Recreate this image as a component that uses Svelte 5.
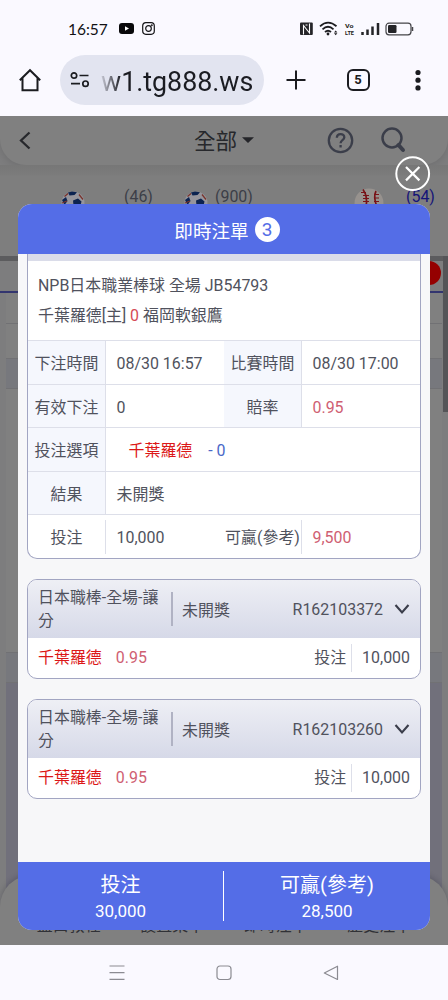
<script lang="ts">
  type Bet = { id: string; name: string; status: string; team: string; odds: string; stake: string };

  const bets: Bet[] = [
    { id: 'R162103372', name: '日本職棒-全場-讓分', status: '未開獎', team: '千葉羅德', odds: '0.95', stake: '10,000' },
    { id: 'R162103260', name: '日本職棒-全場-讓分', status: '未開獎', team: '千葉羅德', odds: '0.95', stake: '10,000' }
  ];

  const tabs = ['盤口教程', '設置菜單', '即時注單', '歷史注單'];
</script>

{#snippet football()}
  <svg class="ball" width="24" height="24" viewBox="0 0 24 24">
    <circle cx="12" cy="12" r="11.5" fill="#96959c" />
    <path d="M7 1.500l4-1 5 .8-2.500 2.800-5 .4z" fill="#0c2350" />
    <path d="M12 9.500l5-2 3.500 3-1 4h-7z" fill="#0c2350" />
    <path d="M1 9l4-3 1.500 4-3 4z" fill="#0c2350" />
    <path d="M3.500 5.500l3.500-3M18 3.500l4 5M1 12l5-2" stroke="#78342c" stroke-width="1.300" />
  </svg>
{/snippet}

<div class="phone">
  <div class="status">
    <span class="clock">16:57</span>
    <svg class="yt" width="15" height="11" viewBox="0 0 15 11">
      <rect width="15" height="11" rx="3" fill="#08080a" />
      <path d="M6 3.200v4.600l4-2.300z" fill="#fff" />
    </svg>
    <svg class="ig" width="13" height="13" viewBox="0 0 13 13" fill="none" stroke="#151518" stroke-width="1.200">
      <rect x=".7" y=".7" width="11.600" height="11.600" rx="3.200" />
      <circle cx="6.500" cy="6.500" r="2.800" />
      <circle cx="9.800" cy="3.200" r=".4" />
    </svg>
    <svg class="signals" width="116" height="16" viewBox="0 0 116 16">
      <rect x="0" y="1.500" width="12.800" height="12.500" rx="1" fill="#252529" />
      <path d="M3.500 13.500V4.500l6 7.500V2.500M5.500 4h2" fill="none" stroke="#fff" stroke-width="1.100" />
      <g fill="none" stroke="#1d1d20" stroke-width="1.800">
        <path d="M20 5.300q8-7.300 16.500 0M22.500 8.300q5.500-5 11 0M25 11q3-2.600 6 0" />
      </g>
      <circle cx="28" cy="13" r="1.400" fill="#1d1d20" />
      <path d="M34 11.500l1.700-2 1.700 2zM34 12.300h3.400l-1.700 2z" fill="#1d1d20" />
      <text x="45" y="7" class="tiny" textLength="8.500" lengthAdjust="spacingAndGlyphs">Vo</text>
      <text x="45" y="14.200" class="tiny" textLength="9" lengthAdjust="spacingAndGlyphs">LTE</text>
      <path d="M62.500 14v-3M67.500 14V8.500M72.500 14V5.500M78 14V2" stroke="#242428" stroke-width="2.500" />
      <rect x="86" y="2.200" width="25" height="11.600" rx="3" fill="none" stroke="#444448" stroke-width="1.200" />
      <rect x="88" y="4" width="8.500" height="8" rx="1.200" fill="#242428" />
      <path d="M112.500 6v4" stroke="#444448" stroke-width="1.500" />
    </svg>
  </div>

  <div class="browser">
    <svg class="home" width="24" height="24" viewBox="0 0 24 24" fill="none" stroke="#1b1c20" stroke-width="2">
      <path d="M1.800 12.200L12 2.200l10.200 10M4.500 10v12.300h15V10" />
    </svg>
    <div class="url">
      <svg width="20" height="18" viewBox="0 0 20 18" fill="none" stroke="#1b1c20" stroke-width="1.700">
        <circle cx="4" cy="4.500" r="2.700" />
        <path d="M9.500 4.500h9M1 12.700h9" />
        <circle cx="15.500" cy="12.700" r="2.700" />
      </svg>
      <span>w1.tg888.ws</span>
    </div>
    <svg class="plus" width="20" height="20" viewBox="0 0 20 20" stroke="#1b1c20" stroke-width="2">
      <path d="M10 .5v19M.5 10h19" />
    </svg>
    <div class="tab-count">5</div>
    <svg class="more" width="6" height="22" viewBox="0 0 6 22" fill="#1b1c20">
      <circle cx="3" cy="3.500" r="2.600" /><circle cx="3" cy="11.200" r="2.600" /><circle cx="3" cy="18.900" r="2.600" />
    </svg>
  </div>

  <div class="page">
    <div class="topbar">
      <svg class="back" width="12" height="20" viewBox="0 0 12 20" fill="none" stroke="#27282c" stroke-width="2.300">
        <path d="M10.500 1.500L2 9.500l8.500 8" />
      </svg>
      <span class="all">全部</span>
      <svg class="caret" width="12" height="7" viewBox="0 0 12 7"><path d="M0 .3h12L6 6z" fill="#242529" /></svg>
      <svg class="help" width="28" height="28" viewBox="0 0 28 28" fill="none" stroke="#3b3e4a" stroke-width="2.300">
        <circle cx="14.500" cy="13.500" r="11.700" />
        <path d="M10.800 10.700c.2-5 7.700-4.500 7.500-.3-.1 2.800-3.700 2.800-3.700 5.800M14.600 18v2.600" />
      </svg>
      <svg class="search" width="26" height="28" viewBox="0 0 26 28" fill="none" stroke="#3b3e4a">
        <circle cx="11" cy="11" r="9.500" stroke-width="2.500" />
        <path d="M17.500 18l4.500 5" stroke-width="4" stroke-linecap="round" />
      </svg>
    </div>

    <div class="sports">
      <div class="sport first">{@render football()}<span>(46)</span></div>
      <div class="sport second">{@render football()}<span>(900)</span></div>
      <div class="sport third">
        <svg class="ball" width="30" height="30" viewBox="0 0 30 30">
          <circle cx="15" cy="15" r="14.500" fill="#97928e" />
          <path d="M9 1.500q5 7 3 17M22 3q-3 6 1 16" fill="none" stroke="#781217" stroke-width="1.700" />
          <path d="M7 4.500h5M9 7.500h6M9 10.500h6M9 13.500h6M20 6.500h5M20 10h5M20 13.500h5" stroke="#781217" stroke-width="1" />
        </svg>
        <span>(54)</span>
      </div>
    </div>

    <div class="backdrop-list">
      <div class="strip"></div>
      <div class="league"><i></i></div>
      <div class="row r1"></div>
      <div class="row r2"></div>
      <div class="row r3"></div>
      <div class="row r4"></div>
      <div class="row r5"></div>
    </div>
    <div class="scrollbar"></div>
    <div class="tabbar">
      {#each tabs as tab}
        <span>{tab}</span>
      {/each}
    </div>

    <div class="modal">
      <div class="modal-head">
        <span>即時注單</span>
        <b>3</b>
      </div>

      <div class="modal-body">
        <div class="card open">
          <div class="match">
            <div>NPB日本職業棒球 全場 JB54793</div>
            <div>千葉羅德[主] <em>0</em> 福岡軟銀鷹</div>
          </div>
          <div class="grid">
            <span class="label">下注時間</span><span class="value">08/30 16:57</span>
            <span class="label">比賽時間</span><span class="value">08/30 17:00</span>
          </div>
          <div class="grid">
            <span class="label">有效下注</span><span class="value">0</span>
            <span class="label">賠率</span><span class="value pink">0.95</span>
          </div>
          <div class="grid">
            <span class="label">投注選項</span>
            <span class="value wide pick"><span class="team">千葉羅德</span><span class="blue">- 0</span></span>
          </div>
          <div class="grid">
            <span class="label">結果</span><span class="value wide">未開獎</span>
          </div>
          <div class="grid last">
            <span class="label">投注</span><span class="value">10,000</span>
            <span class="label">可贏(參考)</span><span class="value pink">9,500</span>
          </div>
        </div>

        {#each bets as bet (bet.id)}
          <div class="card">
            <div class="card-head">
              <span class="name">{bet.name}</span>
              <span class="bar"></span>
              <span class="state">{bet.status}</span>
              <span class="id">{bet.id}</span>
              <svg width="16" height="11" viewBox="0 0 16 11" fill="none" stroke="#3b3e4b" stroke-width="2.100">
                <path d="M1.500 1L8 8.500 14.500 1" />
              </svg>
            </div>
            <div class="card-foot">
              <span class="team">{bet.team}</span>
              <span class="odds">{bet.odds}</span>
              <span class="stake-label">投注</span>
              <span class="stake">{bet.stake}</span>
            </div>
          </div>
        {/each}
      </div>

      <div class="modal-foot">
        <div><span>投注</span><strong>30,000</strong></div>
        <div><span>可贏(參考)</span><strong>28,500</strong></div>
      </div>
    </div>

    <svg class="close" width="36" height="36" viewBox="0 0 36 36" fill="none" stroke="#fff">
      <circle cx="17.700" cy="17.700" r="16.400" stroke-width="2" />
      <path d="M11 11l13.400 13.400M24.400 11L11 24.400" stroke-width="2.200" />
    </svg>
  </div>

  <div class="nav">
    <svg width="16" height="16" viewBox="0 0 16 16" stroke="#8b8b92" stroke-width="1.200"><path d="M.5 1h15M.5 7.700h15M.5 14.400h15" /></svg>
    <svg width="16" height="16" viewBox="0 0 16 16" fill="none" stroke="#8b8b92" stroke-width="1.200"><rect x="1" y="1" width="14" height="13.500" rx="3" /></svg>
    <svg width="16" height="16" viewBox="0 0 16 16" fill="none" stroke="#8b8b92" stroke-width="1.200" stroke-linejoin="round"><path d="M14.500 1.200v13.300L1.300 8z" /></svg>
  </div>
</div>

<style>
  :global(body) {
    margin: 0;
    background: #faf9ff;
  }

  .phone {
    width: 448px;
    height: 1000px;
    display: flex;
    flex-direction: column;
    overflow: hidden;
    font-family: Roboto, 'Noto Sans CJK TC', sans-serif;
    font-size: 15.95px;
    color: #50525d;
    background: #faf9ff;
  }

  svg {
    display: block;
    flex: none;
  }

  .status {
    height: 40px;
    box-sizing: border-box;
    padding: 17px 32px 0 68px;
    display: flex;
    align-items: center;
  }

  .clock {
    width: 51px;
    font-family: Lato, sans-serif;
    font-size: 15.5px;
    color: #111114;
  }

  .ig {
    margin-left: 8px;
  }

  .signals {
    margin-left: auto;
  }

  .tiny {
    font: bold 6px Roboto, sans-serif;
    fill: #1d1d20;
  }

  .browser {
    height: 76px;
    box-sizing: border-box;
    padding: 15px 0 11px 18px;
    display: flex;
    align-items: center;
  }

  .url {
    width: 204px;
    height: 50px;
    box-sizing: border-box;
    margin-left: 18px;
    padding: 0 10px;
    display: flex;
    align-items: center;
    border-radius: 25px;
    background: #e2e4f0;
  }

  .url span {
    margin-left: 11px;
    padding-top: 4px;
    font-size: 26.8px;
    line-height: 46px;
    color: #1b1c22;
    background: linear-gradient(90deg, #c9cad6 0, #1b1c22 20px);
    background-clip: text;
    -webkit-text-fill-color: transparent;
  }

  .plus {
    margin-left: 22px;
  }

  .tab-count {
    width: 23px;
    height: 22px;
    box-sizing: border-box;
    margin-left: 40.500px;
    border: 2.2px solid #1b1c20;
    border-radius: 6px;
    font-size: 13px;
    font-weight: 700;
    line-height: 18px;
    text-align: center;
    color: #1b1c20;
  }

  .more {
    margin-left: 45px;
  }

  .page {
    position: relative;
    height: 829px;
    overflow: hidden;
    background: #7d7d7e;
  }

  .topbar {
    height: 49px;
    box-sizing: border-box;
    padding: 0 41px 0 19px;
    display: flex;
    align-items: center;
    border-radius: 0 0 26px 26px;
    background: #808080;
    box-shadow: 0 2px 8px rgba(0, 0, 0, 0.12);
  }

  .all {
    margin-left: 163px;
    padding-top: 2px;
    font-size: 21.6px;
    line-height: 48px;
    color: #27282c;
  }

  .caret {
    margin-left: 5px;
  }

  .help {
    margin-left: 72px;
  }

  .search {
    margin-left: auto;
  }

  .sports {
    height: 91px;
    display: grid;
    grid-template-columns: 61px 123px 172px 92px;
    background: linear-gradient(#777 0, #7c7c7c 10px, #7e7e7e 11px);
  }

  .sport {
    display: flex;
    align-items: flex-start;
    line-height: 20px;
    color: #3c3e48;
  }

  .first {
    grid-column: 2;
  }

  .second {
    grid-column: 3;
  }

  .third {
    grid-column: 4;
    margin-left: -2px;
  }

  .ball {
    margin-top: 26px;
  }

  .third .ball {
    margin-top: 23px;
  }

  .sport span {
    margin: 22px 0 0 39px;
  }

  .second span {
    margin-left: 7px;
  }

  .third span {
    margin-left: 22px;
    color: #151478;
  }

  .backdrop-list {
    height: 689px;
    display: flex;
    flex-direction: column;
  }

  .strip {
    height: 5px;
    background: #5c5c5e;
  }

  .league {
    height: 30px;
    border-bottom: 2px solid #33356f;
    display: flex;
    justify-content: flex-end;
    align-items: center;
  }

  .league i {
    width: 24px;
    height: 24px;
    margin: 0 7px 6px 0;
    border-radius: 50%;
    background: #950000;
  }

  .row {
    margin: 0 6px;
    border-bottom: 1px solid #717174;
    background: #808080;
  }

  .r1 { height: 30px; }
  .r2 { height: 34px; }
  .r3 { height: 29px; background: #77787d; }
  .r4 { height: 263px; }
  .r5 { height: 29px; background: #77787d; }

  .backdrop-list::after {
    content: '';
    flex: 1;
    margin: 0 6px;
    background: #71707b;
  }

  .scrollbar {
    position: absolute;
    top: 140px;
    right: 0;
    width: 5px;
    height: 156px;
    background: #555558;
  }

  .tabbar {
    position: absolute;
    left: 0;
    right: 0;
    bottom: 0;
    height: 70px;
    box-sizing: border-box;
    padding: 0 17px 9px;
    display: grid;
    grid-template-columns: repeat(4, 1fr);
    align-items: end;
    text-align: center;
    line-height: 20px;
    color: #303137;
    border-radius: 32px 32px 0 0;
    background: #808080;
    box-shadow: 0 -2px 5px rgba(40, 40, 55, 0.25);
  }

  .modal {
    position: absolute;
    top: 88px;
    left: 18px;
    width: 412px;
    height: 726px;
    display: flex;
    flex-direction: column;
    overflow: hidden;
    border-radius: 14px;
    background: #f7f7f9;
  }

  .modal-head {
    height: 50px;
    padding-left: 6px;
    display: flex;
    align-items: center;
    justify-content: center;
    gap: 6px;
    font-size: 18.6px;
    color: #fff;
    background: #546de7;
  }

  .modal-head b {
    width: 25px;
    height: 25px;
    border-radius: 50%;
    font-size: 19px;
    font-weight: 400;
    line-height: 26px;
    text-align: center;
    color: #546de7;
    background: #fff;
  }

  .modal-body {
    flex: 1;
    padding: 0 9px;
    display: flex;
    flex-direction: column;
  }

  .card {
    height: 100px;
    box-sizing: border-box;
    margin-bottom: 20px;
    border: 1px solid #a2a5c2;
    border-radius: 10px;
    overflow: hidden;
    background: #fff;
  }

  .open {
    height: 305px;
    border-top: 0;
    border-radius: 0 0 10px 10px;
  }

  .match {
    height: 86px;
    box-sizing: border-box;
    padding: 10px 10px 0;
    border-top: 7px solid #dadce9;
    line-height: 30px;
  }

  em {
    font-style: normal;
    color: #d54a55;
  }

  .grid {
    height: 43.6px;
    box-sizing: border-box;
    display: grid;
    grid-template-columns: 78px 118px 78px 118px;
    grid-template-rows: 100%;
    border-top: 1px solid #dddfe9;
    line-height: 46px;
  }

  .label {
    border-right: 1px solid #dddfe9;
    text-align: center;
    white-space: nowrap;
    background: #f5f7fd;
  }

  .value {
    padding-left: 10.500px;
  }

  .wide {
    grid-column: span 3;
  }

  .pick {
    display: flex;
    gap: 16px;
    padding-left: 22.500px;
  }

  .last .label {
    height: 34px;
    margin-top: 5px;
    line-height: 36px;
    background: none;
  }

  .pink,
  .odds {
    color: #cf6072;
  }

  .team {
    color: #dc1818;
  }

  .blue {
    color: #4a68c8;
  }

  .card-head {
    height: 58px;
    box-sizing: border-box;
    padding: 0 10px;
    display: flex;
    align-items: center;
    background: linear-gradient(#eeeff5, #d6d9e8);
  }

  .name {
    width: 124px;
    line-height: 23.500px;
    word-break: break-all;
  }

  .bar {
    width: 2px;
    height: 34px;
    margin: 0 9px;
    background: #b0b2c3;
  }

  .state {
    margin-top: -1px;
  }

  .id {
    margin: 0 11px 0 auto;
  }

  .card-foot {
    height: 39px;
    padding: 0 10px;
    display: flex;
    align-items: center;
    line-height: 28px;
  }

  .odds {
    margin-left: 14px;
  }

  .stake-label {
    margin-left: auto;
    padding-right: 5px;
  }

  .stake {
    height: 28px;
    padding-left: 10px;
    border-left: 1px solid #dddfe9;
  }

  .modal-foot {
    height: 68px;
    display: flex;
    align-items: center;
    color: #fff;
    background: #546de7;
  }

  .modal-foot div {
    width: 205px;
    height: 50px;
    display: flex;
    flex-direction: column;
    align-items: center;
  }

  .modal-foot div + div {
    width: 206px;
    border-left: 1px solid #fff;
  }

  .modal-foot span {
    padding-top: 1px;
    font-size: 20px;
    line-height: 27px;
  }

  .modal-foot strong {
    font-size: 17px;
    font-weight: 400;
    line-height: 24px;
  }

  .close {
    position: absolute;
    top: 40px;
    left: 395px;
  }

  .nav {
    flex: 1;
    display: flex;
    align-items: center;
    justify-content: center;
    gap: 91px;
    background: #faf9ff;
  }
</style>
